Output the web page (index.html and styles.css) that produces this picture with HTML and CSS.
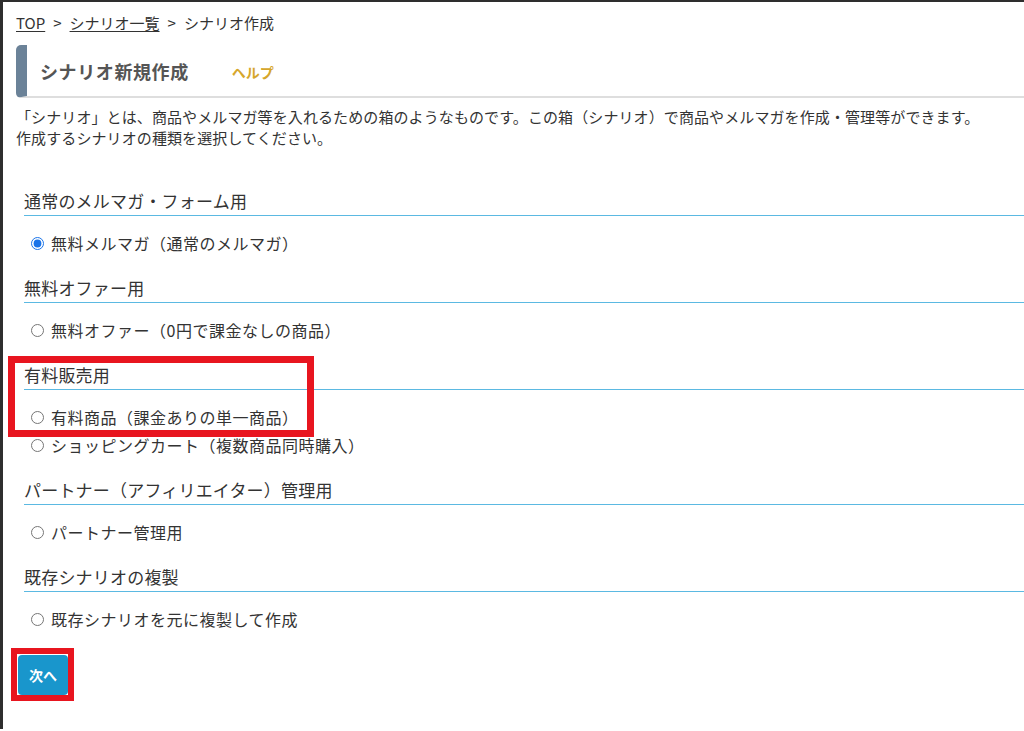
FILE: index.html
```html
<!DOCTYPE html>
<html lang="ja">
<head>
<meta charset="utf-8">
<title>シナリオ作成</title>
<link rel="stylesheet" href="styles.css">
</head>
<body>
<div class="frame">
  <div class="content">
    <nav class="crumbs">
      <a href="#">TOP</a><span class="sep">&gt;</span><a href="#">シナリオ一覧</a><span class="sep">&gt;</span><span>シナリオ作成</span>
    </nav>

    <div class="page-head">
      <h1 class="page-title">シナリオ新規作成</h1>
      <a class="help" href="#">ヘルプ</a>
    </div>

    <p class="desc">「シナリオ」とは、商品やメルマガ等を入れるための箱のようなものです。この箱（シナリオ）で商品やメルマガを作成・管理等ができます。<br>作成するシナリオの種類を選択してください。</p>

    <form class="types">
      <section class="group">
        <h2 class="group-title">通常のメルマガ・フォーム用</h2>
        <div class="options">
          <label class="opt"><input type="radio" name="type" checked><span>無料メルマガ（通常のメルマガ）</span></label>
        </div>
      </section>

      <section class="group">
        <h2 class="group-title">無料オファー用</h2>
        <div class="options">
          <label class="opt"><input type="radio" name="type"><span>無料オファー（0円で課金なしの商品）</span></label>
        </div>
      </section>

      <section class="group marked">
        <div class="mark mark-group"></div>
        <h2 class="group-title">有料販売用</h2>
        <div class="options">
          <label class="opt"><input type="radio" name="type"><span>有料商品（課金ありの単一商品）</span></label>
          <label class="opt"><input type="radio" name="type"><span>ショッピングカート（複数商品同時購入）</span></label>
        </div>
      </section>

      <section class="group">
        <h2 class="group-title">パートナー（アフィリエイター）管理用</h2>
        <div class="options">
          <label class="opt"><input type="radio" name="type"><span>パートナー管理用</span></label>
        </div>
      </section>

      <section class="group">
        <h2 class="group-title">既存シナリオの複製</h2>
        <div class="options">
          <label class="opt"><input type="radio" name="type"><span>既存シナリオを元に複製して作成</span></label>
        </div>
      </section>

      <div class="actions">
        <div class="mark mark-btn"></div>
        <button type="button" class="btn-next">次へ</button>
      </div>
    </form>
  </div>
</div>
</body>
</html>
```

FILE: styles.css
```css
html, body {
  margin: 0;
  padding: 0;
  background: #ffffff;
}

body {
  font-family: "Noto Sans CJK JP", "Noto Sans", sans-serif;
  color: #333333;
}

.frame {
  border-top: 2px solid #2e2e2e;
  border-left: 3px solid #2e2e2e;
  min-height: 729px;
  box-sizing: border-box;
  overflow: hidden;
}

.content {
  padding: 10px 0 0 13px;
}

.crumbs {
  font-size: 15px;
  line-height: 22px;
  color: #333333;
}

.crumbs a {
  color: #333333;
  text-decoration: underline;
  text-underline-offset: 2px;
}

.crumbs .sep {
  margin: 0 8px;
}

.page-head {
  margin-top: 11px;
  height: 51px;
  display: flex;
  align-items: center;
  border-left: 11px solid #6b8298;
  border-bottom: 2px solid #dedede;
  border-radius: 5px 0 0 5px;
  padding-left: 13px;
}

.page-title {
  margin: 0;
  font-size: 18px;
  font-weight: bold;
  color: #555555;
  line-height: 24px;
  letter-spacing: 0.6px;
}

.help {
  margin-left: 43px;
  font-size: 14px;
  font-weight: bold;
  color: #d6a62c;
  text-decoration: none;
  line-height: 24px;
  padding-top: 2px;
}

.desc {
  margin: 8px 0 0;
  font-size: 15px;
  line-height: 21px;
  color: #333333;
  white-space: nowrap;
  letter-spacing: 0.1px;
}

.types {
  margin: 41px 0 0 8px;
}

.group {
  position: relative;
  padding-bottom: 19px;
}

.group-title {
  margin: 0;
  font-size: 17px;
  font-weight: normal;
  line-height: 24px;
  padding-bottom: 2px;
  border-bottom: 1px solid #5bb9e2;
  color: #333333;
  letter-spacing: 0.2px;
}

.options {
  padding: 13px 0 0 7px;
}

.opt {
  display: flex;
  align-items: center;
  height: 28px;
  font-size: 16px;
  color: #333333;
  letter-spacing: 0.5px;
}

.opt input {
  width: 13px;
  height: 13px;
  margin: 0 7px 0 0;
  accent-color: #1a73e8;
}

.actions {
  position: relative;
  padding-top: 3px;
  margin-left: -6px;
}

.btn-next {
  display: block;
  width: 50px;
  height: 40px;
  border: 0;
  border-radius: 4px;
  background: #1996cc;
  color: #ffffff;
  font-family: "Noto Sans CJK JP", sans-serif;
  font-size: 14px;
  font-weight: bold;
  padding: 0;
  box-shadow: 0 0 0 1px #ffffff;
}

.mark {
  position: absolute;
  border: 7px solid #e8151f;
  box-sizing: border-box;
  pointer-events: none;
}

.mark-group {
  left: -16px;
  top: -7px;
  width: 306px;
  height: 81px;
}

.mark-btn {
  left: -7px;
  top: -4px;
  width: 63px;
  height: 53px;
  border-width: 6px;
}
```
